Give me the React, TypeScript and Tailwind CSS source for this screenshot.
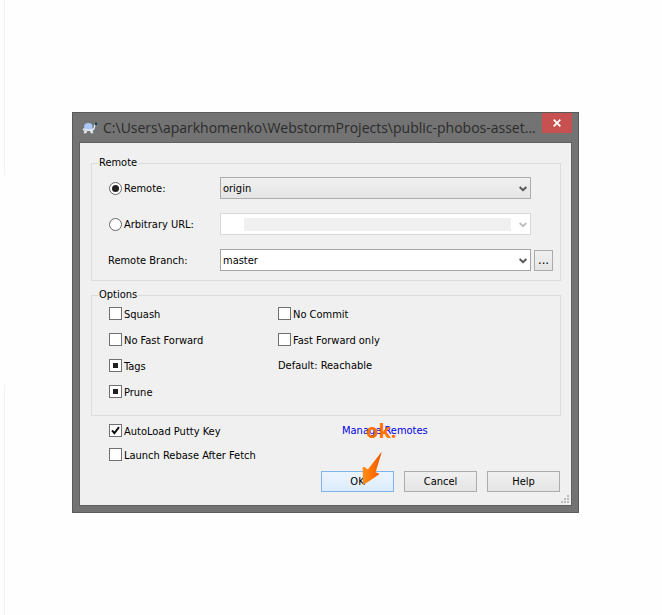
import { useEffect, useRef } from 'react';
import type { ReactNode } from 'react';

type Mark = 'off' | 'on' | 'mixed';

function Tick({ label, mark = 'off' }: { label: string; mark?: Mark }) {
  const ref = useRef<HTMLInputElement>(null);
  useEffect(() => {
    if (ref.current) ref.current.indeterminate = mark === 'mixed';
  }, [mark]);
  return (
    <label className="flex h-[13px] items-center gap-[2px] whitespace-nowrap">
      <span className="relative size-[13px] shrink-0">
        <input
          ref={ref}
          type="checkbox"
          defaultChecked={mark === 'on'}
          className="peer block size-[13px] appearance-none border border-[#707070] bg-white"
        />
        <span className="pointer-events-none absolute inset-[4px] hidden bg-[#212121] peer-indeterminate:block" />
        <svg viewBox="0 0 13 13" className="pointer-events-none absolute inset-0 hidden size-[13px] peer-checked:block">
          <path d="M3 6.3 5.4 9.2 10 3.2" fill="none" stroke="#111" strokeWidth="2" />
        </svg>
      </span>
      <span className="pt-[2px]">{label}</span>
    </label>
  );
}

function Radio({ label, checked = false }: { label: string; checked?: boolean }) {
  return (
    <label className="flex items-center gap-[2px] pl-px">
      <span className="relative size-[13px] shrink-0">
        <input
          type="radio"
          name="source"
          defaultChecked={checked}
          className="peer block size-[13px] appearance-none rounded-full border border-[#666] bg-white"
        />
        <span className="pointer-events-none absolute inset-[3px] hidden rounded-full bg-[#212121] peer-checked:block" />
      </span>
      <span className="pt-[2px]">{label}</span>
    </label>
  );
}

function Combo({ id, label, value, tone, disabled = false, children }: {
  id: string; label: string; value: string; tone: string; disabled?: boolean; children?: ReactNode;
}) {
  return (
    <div className="relative">
      <select
        id={id}
        aria-label={label}
        disabled={disabled}
        className={`block h-[22px] w-full appearance-none border px-[2px] pt-[2px] ${tone}`}
      >
        <option>{value}</option>
      </select>
      {children}
      <svg viewBox="0 0 8 6" className={`pointer-events-none absolute top-[9px] right-[4px] h-[6px] w-[8px] ${disabled ? 'text-[#bfbfbf]' : 'text-[#555]'}`}>
        <path d="M.6 1 4 4.2 7.4 1" fill="none" stroke="currentColor" strokeWidth="2" />
      </svg>
    </div>
  );
}

const plainButton = 'h-[21px] w-[73px] border border-[#acacac] bg-linear-to-b from-[#f0f0f0] to-[#e5e5e5] pt-px';

function Turtle() {
  return (
    <svg viewBox="0 0 16 14" className="h-[14px] w-[16px] shrink-0">
      <path d="M2 7 1 9l2 .5M3 9l-1 3h2l1-2M8 9l1 3h2l-1-3" fill="#d9dde0" stroke="#dfe4e8" strokeWidth=".8" />
      <path d="M9 8q3 0 3-4l2-2 1 2-2 2q0 4-4 4z" fill="#d6e2ec" />
      <ellipse cx="6.3" cy="5.6" rx="4.2" ry="3.6" fill="#a9c9fa" />
      <path d="M2 7q4 3 8.5.5L10 9q-4 2-7 0z" fill="#f1f3f6" />
      <path d="M13 1.5h2v3h-2z" fill="#17384f" />
    </svg>
  );
}

export default function App() {
  return (
    <div className="flex min-h-screen bg-[#fefefe] font-[family-name:'DejaVu_Sans_Condensed','DejaVu_Sans',sans-serif] text-[11px] leading-[14px] text-black">
      <div className="ml-[4px] flex w-px shrink-0 flex-col justify-between">
        <div className="h-[175px] bg-[#f3f3f3]" />
        <div className="h-[230px] bg-[#f3f3f3]" />
      </div>
      <main className="min-w-0 flex-1 pt-[112px] pr-[83px] pl-[67px]">
        <section className="border border-[#5a5a5a] bg-[#737373] px-[6px] pb-[6px]">
          <header className="flex h-[29px] items-start">
            <div className="flex min-w-0 flex-1 items-center gap-[5px] pt-[4px] pl-[3px]">
              <Turtle />
              <h1 className="min-w-0 flex-1 truncate font-['Open_Sans'] text-[14px] leading-[22px] text-[#2b2b2b]">
                C:\Users\aparkhomenko\WebstormProjects\public-phobos-asset...
              </h1>
            </div>
            <button type="button" aria-label="Close" className="flex h-[20px] w-[30px] shrink-0 items-center justify-center bg-[#c75050]">
              <svg viewBox="0 0 8 8" className="size-[8px]">
                <path d="M.7.7l6.6 6.6M7.3.7.7 7.3" stroke="#fff" strokeWidth="1.8" />
              </svg>
            </button>
          </header>

          <form className="relative border border-[#606060] bg-[#f0f0f0] pt-[13px] pr-[10px] pb-[13px] pl-[11px]">
            <fieldset className="border border-[#dcdcdc] pr-[7px] pb-[9px] pl-[16px]">
              <legend className="-ml-[10px] px-[1px]">Remote</legend>
              <div className="grid grid-cols-[112px_1fr_22px] items-center gap-y-[14px] pt-[7px]">
                <Radio label="Remote:" checked />
                <Combo id="remote" label="Remote" value="origin" tone="border-[#acacac] bg-linear-to-b from-[#f0f0f0] to-[#e5e5e5]" />
                <span />
                <Radio label="Arbitrary URL:" />
                <Combo id="url" label="Arbitrary URL" value="" disabled tone="border-[#d9d9d9] bg-white">
                  <span className="absolute top-[5px] right-[20px] left-[24px] h-[13px] bg-[#f0f0f0]" />
                </Combo>
                <span />
                <label htmlFor="branch" className="pt-[2px]">Remote Branch:</label>
                <Combo id="branch" label="Remote Branch" value="master" tone="border-[#a5a5a5] bg-white" />
                <button type="button" aria-label="Browse branches" className="ml-[3px] h-[21px] border border-[#acacac] bg-linear-to-b from-[#f0f0f0] to-[#e5e5e5] text-[13px]">
                  ...
                </button>
              </div>
            </fieldset>

            <fieldset className="mt-[7px] border border-[#dcdcdc] pr-[7px] pb-[17px] pl-[17px]">
              <legend className="-ml-[11px] px-[1px]">Options</legend>
              <div className="grid grid-cols-[169px_1fr] gap-y-[13px] pt-[5px]">
                <Tick label="Squash" />
                <Tick label="No Commit" />
                <Tick label="No Fast Forward" />
                <Tick label="Fast Forward only" />
                <Tick label="Tags" mark="mixed" />
                <span className="h-[13px] leading-[14px]">Default: Reachable</span>
                <Tick label="Prune" mark="mixed" />
              </div>
            </fieldset>

            <div className="grid grid-cols-[233px_1fr] gap-y-[11px] pt-[8px] pl-[18px]">
              <Tick label="AutoLoad Putty Key" mark="on" />
              <a href="#remotes" className="h-[13px] leading-[14px] text-[#0000e6]">Manage Remotes</a>
              <Tick label="Launch Rebase After Fetch" />
            </div>

            <div className="flex justify-end gap-[10px] pt-[10px] pr-[1px]">
              <div className="relative">
                <button type="submit" className="h-[21px] w-[73px] border border-[#7eb4ea] bg-linear-to-b from-[#ecf4fc] to-[#dcecfc] pt-px">OK</button>
                <span className="pointer-events-none absolute -top-[52px] left-[45px] font-['Open_Sans'] text-[20px] leading-[24px] font-bold text-[#ff7200]">ok.</span>
                <svg viewBox="0 0 20 35" className="pointer-events-none absolute -top-[20px] left-[41px] h-[35px] w-[20px]">
                  <defs>
                    <linearGradient id="arrow" x1="0" x2="1">
                      <stop offset="0" stopColor="#ff8f1c" />
                      <stop offset=".5" stopColor="#ff7200" />
                      <stop offset="1" stopColor="#e85a00" />
                    </linearGradient>
                  </defs>
                  <path d="M19.3 1.2Q19.8 1 19.5 2L13.6 21.3 16.8 22.4Q17.6 23 16.6 23.8L1 34.3 .6 17Q1 15.4 2.6 16L5.8 18.6Z" fill="url(#arrow)" />
                </svg>
              </div>
              <button type="button" className={plainButton}>Cancel</button>
              <button type="button" className={plainButton}>Help</button>
            </div>

            <svg viewBox="0 0 8 8" className="absolute right-[2px] bottom-[2px] size-[8px]" fill="#bcbcbc">
              <path d="M6 0h2v2H6zM3 3h2v2H3zM6 3h2v2H6zM0 6h2v2H0zM3 6h2v2H3zM6 6h2v2H6z" />
            </svg>
          </form>
        </section>
      </main>
    </div>
  );
}
